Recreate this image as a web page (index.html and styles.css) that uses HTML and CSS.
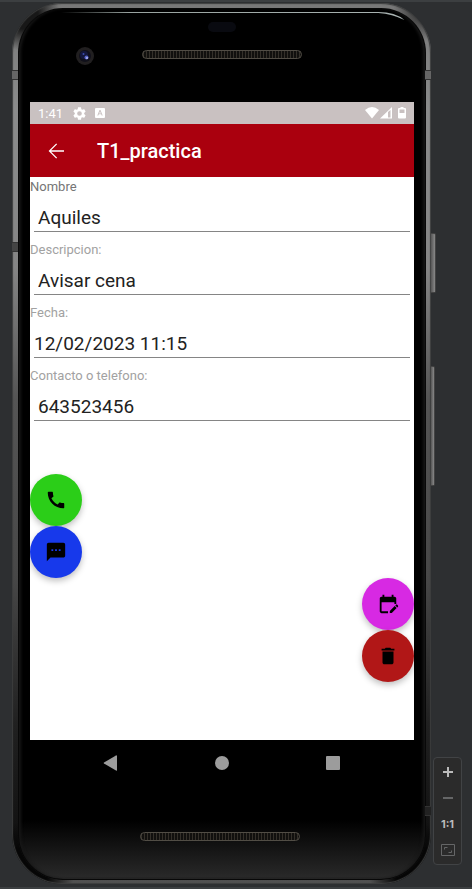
FILE: index.html
```html
<!DOCTYPE html>
<html lang="es">
<head>
<meta charset="utf-8">
<meta name="viewport" content="width=device-width, initial-scale=1">
<title>T1_practica</title>
<link rel="stylesheet" href="styles.css">
</head>
<body>
<main class="workspace">
  <div class="phone">
    <span class="seam seam-left-top"></span>
    <span class="seam seam-left-mid"></span>
    <span class="seam seam-right-top"></span>
    <span class="seam seam-right-low"></span>
    <span class="key key-power"></span>
    <span class="key key-volume"></span>
    <div class="glass">
      <div class="bezel-top">
        <svg class="shine" viewBox="0 0 348 14" preserveAspectRatio="none" aria-hidden="true">
          <defs><linearGradient id="sh" x1="0" x2="1" y1="0" y2="0"><stop offset="0" stop-color="#99a3a0" stop-opacity="0"/><stop offset=".2" stop-color="#99a3a0"/><stop offset="1" stop-color="#a9b3b2"/></linearGradient></defs>
          <path d="M0 2H316Q333 2 342 10Q330 4 316 3H0Z" fill="url(#sh)"/>
        </svg>
        <span class="sensor"></span>
        <svg class="camera" viewBox="0 0 18 18" aria-hidden="true">
          <circle cx="9" cy="9" r="9" fill="#211f20"/><circle cx="9" cy="9" r="6" fill="#10101a"/>
          <circle cx="8" cy="8" r="4" fill="#14183c"/><circle cx="10.500" cy="10.500" r="2" fill="#5864c8"/><circle cx="7.500" cy="7" r="1" fill="#3c4cae"/><circle cx="11" cy="11" r="1" fill="#b4baf5"/>
        </svg>
        <span class="speaker"></span>
      </div>
      <section class="screen">
        <div class="status">
          <span class="clock">1:41</span>
          <svg class="gear" viewBox="2 2 20 20" aria-hidden="true"><path fill="#fff" d="M19.140 12.940c.04-.3.06-.61.06-.94 0-.32-.02-.64-.07-.94l2.030-1.580c.18-.14.23-.41.12-.61l-1.920-3.320c-.12-.22-.37-.29-.59-.22l-2.390.96c-.5-.38-1.030-.7-1.620-.94l-.36-2.540c-.04-.24-.24-.41-.48-.41h-3.840c-.24 0-.43.17-.47.41l-.36 2.540c-.59.24-1.130.57-1.620.94l-2.390-.96c-.22-.08-.47 0-.59.22L2.740 8.870c-.12.21-.08.47.12.61l2.030 1.580c-.05.3-.09.63-.09.94s.02.64.07.94l-2.030 1.580c-.18.14-.23.41-.12.61l1.920 3.320c.12.22.37.29.59.22l2.390-.96c.5.38 1.030.7 1.620.94l.36 2.540c.05.24.24.41.48.41h3.840c.24 0 .44-.17.47-.41l.36-2.540c.59-.24 1.130-.56 1.620-.94l2.390.96c.22.08.47 0 .59-.22l1.920-3.320c.12-.22.07-.47-.12-.61zM12 15.600a3.600 3.600 0 1 1 0-7.200 3.600 3.600 0 0 1 0 7.200z"/></svg>
          <svg class="app" viewBox="0 0 10 10" aria-hidden="true"><path fill="#fff" fill-rule="evenodd" d="M1 0h8q1 0 1 1v8q0 1-1 1H1q-1 0-1-1V1q0-1 1-1zM4.500 2L2.300 7.500h1l.5-1.200h2.400l.5 1.200h1L5.500 2zM5 3.300l.8 2.200H4.200z"/></svg>
          <svg class="signals" viewBox="0 0 42 14" aria-hidden="true">
            <path fill="#fff" d="M0 4Q7-2 14 4L7 12.500Z"/>
            <path fill="#fff" fill-rule="evenodd" d="M15 12.500L27 1V12.500ZM23 6v5.500h2.500V4Z"/>
            <path fill="#fff" fill-rule="evenodd" d="M35.500 1h3v1H40q1 0 1 1v8.500q0 1-1 1h-6q-1 0-1-1V3q0-1 1-1h1.500zM34.500 3.500V7h5V3.500z"/>
          </svg>
        </div>
        <header class="appbar">
          <button class="back" type="button" aria-label="Atrás"><svg viewBox="4 4 16 16" aria-hidden="true"><path fill="#fff" d="M20 11.300H7.100l6-6L12.200 4.400 4.600 12l7.600 7.600.9-.9-6-6H20z"/></svg></button>
          <h1>T1_practica</h1>
        </header>
        <form class="form">
          <div class="field"><label class="strong" for="nombre">Nombre</label><input id="nombre" type="text" value="Aquiles"></div>
          <div class="field"><label for="desc">Descripcion:</label><input id="desc" type="text" value="Avisar cena"></div>
          <div class="field"><label for="fecha">Fecha:</label><input class="flush" id="fecha" type="text" value="12/02/2023 11:15"></div>
          <div class="field"><label for="tel">Contacto o telefono:</label><input id="tel" type="text" value="643523456"></div>
        </form>
        <div class="actions">
          <button class="fab call" type="button" aria-label="Llamar"><svg viewBox="0 0 24 24" aria-hidden="true"><path d="M20.010 15.380c-1.230 0-2.420-.2-3.530-.56-.35-.12-.74-.03-1.010.24l-1.570 1.970c-2.830-1.350-5.480-3.900-6.890-6.830l1.950-1.660c.27-.28.35-.67.24-1.020-.37-1.110-.56-2.300-.56-3.530 0-.54-.45-.99-.99-.99H4.190C3.650 3 3 3.240 3 3.990 3 13.280 10.730 21 20.010 21c.71 0 .99-.63.99-1.180v-3.450c0-.54-.45-.99-.99-.99z"/></svg></button>
          <button class="fab message" type="button" aria-label="Mensaje"><svg viewBox="0 0 24 24" aria-hidden="true"><path d="M20 2H4c-1.100 0-1.990.9-1.990 2L2 22l4-4h14c1.100 0 2-.9 2-2V4c0-1.100-.9-2-2-2zM9 11H7V9h2v2zm4 0h-2V9h2v2zm4 0h-2V9h2v2z"/></svg></button>
          <button class="fab date" type="button" aria-label="Editar fecha"><svg viewBox="0 0 24 24" aria-hidden="true"><path d="M5 10h14v2h2V6c0-1.100-.9-2-2-2h-1V2h-2v2H8V2H6v2H5c-1.110 0-1.990.9-1.990 2L3 20c0 1.100.89 2 2 2h7v-2H5V10zM22.840 14.990l-.71.71-2.120-2.120.71-.71c.39-.39 1.020-.39 1.410 0l.71.71c.39.39.39 1.020 0 1.410zM19.300 14.290l2.120 2.120-5.300 5.300H14v-2.120z"/></svg></button>
          <button class="fab remove" type="button" aria-label="Eliminar"><svg viewBox="0 0 24 24" aria-hidden="true"><path d="M6 19c0 1.100.9 2 2 2h8c1.100 0 2-.9 2-2V7H6v12zM19 4h-3.500l-1-1h-5l-1 1H5v2h14V4z"/></svg></button>
        </div>
      </section>
      <nav class="navbar">
        <button type="button" aria-label="Volver"><svg viewBox="0 0 16 16" aria-hidden="true"><path fill="#9c9c9c" d="M14 .8V15.200Q14 16 13 15.500L1 8.500Q.3 8 1 7.500L13 .5Q14 0 14 .8Z"/></svg></button>
        <button type="button" aria-label="Inicio"><svg viewBox="0 0 16 16" aria-hidden="true"><circle cx="8" cy="8" r="7" fill="#9c9c9c"/></svg></button>
        <button type="button" aria-label="Recientes"><svg viewBox="0 0 16 16" aria-hidden="true"><rect x="1" y="1" width="14" height="14" rx="1" fill="#9c9c9c"/></svg></button>
      </nav>
      <div class="bezel-bottom"><span class="speaker"></span></div>
    </div>
  </div>
  <div class="zoombar">
    <button type="button" aria-label="Acercar"><svg viewBox="0 0 14 14" aria-hidden="true"><path d="M7 2v10M2 7h10" stroke="#bbb" stroke-width="2"/></svg></button>
    <button type="button" aria-label="Alejar"><svg viewBox="0 0 14 14" aria-hidden="true"><path d="M2 7h10" stroke="#656667" stroke-width="2"/></svg></button>
    <button type="button">1:1</button>
    <button type="button" aria-label="Ajustar"><svg viewBox="0 0 14 14" aria-hidden="true"><path d="M.5 1.500h13v11H.5zM3.500 6.500v-2h3M10.500 7.500v2h-3" fill="none" stroke="#656667"/></svg></button>
  </div>
</main>
</body>
</html>
```
FILE: styles.css
```css
* { box-sizing: border-box; }

body {
  margin: 0;
  background: #2d2f31;
  font-family: Roboto, "Liberation Sans", sans-serif;
}

button {
  display: flex;
  align-items: center;
  justify-content: center;
  padding: 0;
  border: 0;
  background: none;
  cursor: pointer;
}

svg { display: block; }

.workspace {
  position: relative;
  display: flex;
  min-height: 100vh;
  padding: 1px 41px 3px 12px;
  border-top: 2px solid #3c3f41;
  border-bottom: 2px solid #3c3f41;
}

/* Metal body of the device, darker at its corners */
.phone {
  position: relative;
  display: flex;
  flex: 1;
  padding: 5px 5px 4px 6px;
  border-radius: 50px;
  background:
    radial-gradient(circle at 12px 12px, #181818 14px, transparent 36px),
    radial-gradient(circle at calc(100% - 8px) 8px, #444 10px, transparent 30px),
    radial-gradient(circle at 12px calc(100% - 12px), #060606 24px, transparent 50px),
    radial-gradient(circle at calc(100% - 12px) calc(100% - 12px), #060606 24px, transparent 50px),
    linear-gradient(#777 0, #8b8c8c 12%, #858585 30%, #555 45%, #484848 65%, #202020 82%, #111 95%, #555 100%);
  box-shadow: inset 0 0 1px 1px #3c3d3d;
}

.glass {
  display: flex;
  flex: 1;
  flex-direction: column;
  padding: 0 12px;
  border-radius: 45px;
  background: linear-gradient(transparent calc(100% - 60px), #2b2b2b), #000;
  box-shadow: inset 0 0 0 1px #080808, inset 3px 0 3px #171717, inset -3px 0 3px #171717;
}

.seam {
  position: absolute;
  width: 6px;
  height: 10px;
  border: solid #333;
  border-width: 1px 0;
  background: #666;
}

.seam-left-top { left: 0; top: 67px; }
.seam-left-mid { left: 0; top: 239px; background: #444; }
.seam-right-top { right: 0; top: 67px; }
.seam-right-low { right: 0; bottom: 68px; background: #222; }

.key {
  position: absolute;
  left: 100%;
  width: 5px;
  border: 1px solid #444;
  border-left: 0;
  border-radius: 0 2px 2px 0;
  background: linear-gradient(90deg, #555, #888);
}

.key-power { top: 230px; height: 60px; }
.key-volume { top: 363px; height: 120px; width: 4px; }

.bezel-top {
  position: relative;
  display: flex;
  flex-direction: column;
  align-items: center;
  height: 94px;
  padding-top: 14px;
}

.shine { position: absolute; top: 2px; left: 8%; width: 91%; height: 14px; }

.sensor { width: 28px; height: 10px; border-radius: 5px; background: #090a10; }

.camera { position: absolute; left: 46px; top: 39px; width: 18px; height: 18px; }

.speaker {
  width: 160px;
  height: 9px;
  border: 1px solid #514d45;
  border-radius: 5px;
  background: repeating-linear-gradient(90deg, #34302a 0, #34302a 1px, #11100e 1px, #11100e 3px);
}

.bezel-top .speaker { margin-top: 18px; }

.screen { flex: 1; background: #fff; }

.status {
  display: flex;
  align-items: center;
  height: 22px;
  padding: 0 7px 0 8px;
  background: #c9c1c1;
  color: #fff;
  font-size: 13px;
}

.clock { margin-right: 10px; }
.gear { width: 13px; height: 13px; margin-right: 9px; }
.app { width: 10px; height: 10px; }
.signals { width: 42px; height: 14px; margin-left: auto; }

.appbar {
  display: flex;
  align-items: center;
  height: 53px;
  padding-left: 18px;
  background: #aa000e;
  color: #fff;
}

.back svg { width: 16px; height: 16px; }
.appbar h1 { margin: 0 0 0 33px; font-size: 20px; font-weight: 500; }

.field { display: flex; flex-direction: column; height: 63px; }
.field label { height: 18px; color: #a2a2a2; font-size: 13px; line-height: 20px; }
.field .strong { color: #757575; }

.field input {
  height: 37px;
  margin: 0 4px;
  padding: 9px 4px 0;
  border: 0;
  border-bottom: 1px solid #858585;
  border-radius: 0;
  outline: 0;
  background: none;
  color: #222;
  font: 19px Roboto, "Liberation Sans", sans-serif;
}

.field .flush { padding-left: 0; }

.actions { display: flex; flex-direction: column; padding-top: 45px; }

.fab {
  width: 52px;
  height: 52px;
  border-radius: 50%;
  box-shadow: 0 3px 6px rgba(0, 0, 0, .25);
}

.fab svg { width: 22px; height: 22px; }
.call { background: #2bce18; }
.message { background: #1739eb; }
.date, .remove { align-self: flex-end; }
.date { background: #d729e3; }
.remove { background: #b11717; }

.navbar {
  display: flex;
  align-items: center;
  justify-content: space-between;
  height: 45px;
  padding: 0 73px;
}

.navbar svg { width: 16px; height: 16px; }

.bezel-bottom { display: flex; justify-content: center; height: 95px; padding: 47px 5px 0 0; }

/* Floating zoom controls of the emulator window */
.zoombar {
  position: absolute;
  right: 10px;
  bottom: 22px;
  display: flex;
  flex-direction: column;
  width: 29px;
  padding: 1px 0;
  border: 1px solid #414345;
  border-radius: 4px;
  background: #2b2b2b;
}

.zoombar button {
  height: 26px;
  color: #bbb;
  font: 700 11px Inter, "Liberation Sans", sans-serif;
}

.zoombar svg { width: 14px; height: 14px; }
```
